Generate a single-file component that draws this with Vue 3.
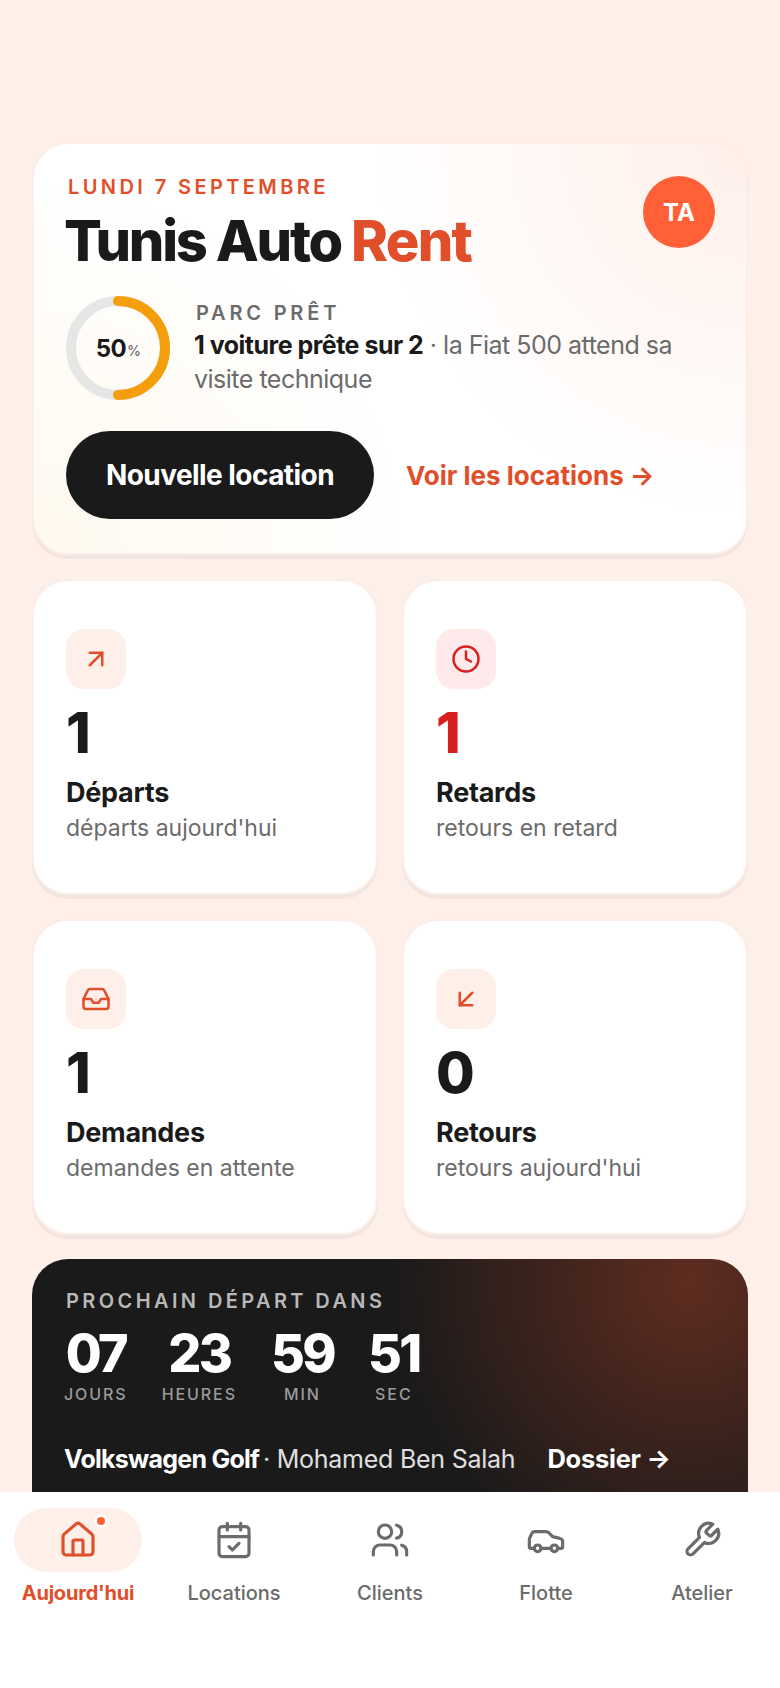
<template>
	<div class="app">
		<main class="content">
			<section class="hero card">
				<div class="hero-top">
					<div>
						<p class="date">LUNDI 7 SEPTEMBRE</p>
						<h1 class="brand">Tunis Auto <span class="accent">Rent</span></h1>
					</div>
					<div class="avatar">TA</div>
				</div>
				<div class="ready">
					<div class="ring">
						<svg viewBox="0 0 104 104" width="104" height="104">
							<circle cx="52" cy="52" r="47" fill="none" stroke="#e6e6e6" stroke-width="10" />
							<path d="M52 5a47 47 0 0 1 0 94" fill="none" stroke="#f59e0b" stroke-width="10" stroke-linecap="round" />
						</svg>
						<span class="ring-text">50<small>%</small></span>
					</div>
					<div class="ready-text">
						<p class="ready-label">PARC PRÊT</p>
						<p class="ready-desc"><strong>1 voiture prête sur 2</strong> · la Fiat 500 attend sa visite technique</p>
					</div>
				</div>
				<div class="actions">
					<button class="primary" type="button">Nouvelle location</button>
					<a class="link">Voir les locations →</a>
				</div>
			</section>

			<section class="stats">
				<article v-for="s in stats" :key="s.title" class="stat card">
					<div class="stat-icon" :class="{danger: s.danger}">
						<svg viewBox="0 0 24 24" width="30" height="30" class="ico">
							<path v-for="d in s.paths" :key="d" :d="d" />
							<circle v-if="s.circle" cx="12" cy="12" r="10" />
						</svg>
					</div>
					<div class="stat-num" :class="{danger: s.danger}">{{ s.value }}</div>
					<div class="stat-title">{{ s.title }}</div>
					<div class="stat-sub">{{ s.sub }}</div>
				</article>
			</section>

			<section class="next">
				<p class="next-label">PROCHAIN DÉPART DANS</p>
				<div class="count">
					<div v-for="c in countdown" :key="c.unit" class="count-col">
						<span class="count-num">{{ c.num }}</span>
						<span class="count-unit">{{ c.unit }}</span>
					</div>
				</div>
				<div class="next-foot">
					<span class="next-car"><strong>Volkswagen Golf</strong> · Mohamed Ben Salah</span>
					<a class="next-link">Dossier →</a>
				</div>
			</section>
		</main>

		<nav class="tabs">
			<div v-for="t in tabs" :key="t.label" class="tab" :class="{active: t.active}">
				<div class="tab-icon">
					<svg viewBox="0 0 24 24" width="40" height="40" class="ico">
						<path v-for="d in t.paths" :key="d" :d="d" />
						<circle v-for="c in t.circles" :key="c[0]" :cx="c[0]" :cy="c[1]" :r="c[2]" />
						<rect v-if="t.rect" x="3" y="4" width="18" height="18" rx="2" />
					</svg>
					<span v-if="t.active" class="dot"></span>
				</div>
				<span class="tab-label">{{ t.label }}</span>
			</div>
		</nav>
	</div>
</template>

<script setup>
const stats = [
	{value: "1", title: "Départs", sub: "départs aujourd'hui", paths: ["M7 7h10v10", "M7 17 17 7"]},
	{value: "1", title: "Retards", sub: "retours en retard", danger: true, circle: true, paths: ["M12 6v6l4 2"]},
	{
		value: "1",
		title: "Demandes",
		sub: "demandes en attente",
		paths: [
			"M22 12h-6l-2 3h-4l-2-3H2",
			"M5.45 5.11 2 12v6a2 2 0 0 0 2 2h16a2 2 0 0 0 2-2v-6l-3.45-6.89A2 2 0 0 0 16.76 4H7.24a2 2 0 0 0-1.79 1.11z"
		]
	},
	{value: "0", title: "Retours", sub: "retours aujourd'hui", paths: ["M17 7 7 17", "M17 17H7V7"]}
]

const countdown = [
	{num: "07", unit: "JOURS"},
	{num: "23", unit: "HEURES"},
	{num: "59", unit: "MIN"},
	{num: "51", unit: "SEC"}
]

const tabs = [
	{
		label: "Aujourd'hui",
		active: true,
		paths: [
			"M15 21v-8a1 1 0 0 0-1-1h-4a1 1 0 0 0-1 1v8",
			"M3 10a2 2 0 0 1 .709-1.528l7-5.999a2 2 0 0 1 2.582 0l7 5.999A2 2 0 0 1 21 10v9a2 2 0 0 1-2 2H5a2 2 0 0 1-2-2z"
		]
	},
	{label: "Locations", rect: true, paths: ["M8 2v4", "M16 2v4", "M3 10h18", "m9 16 2 2 4-4"]},
	{
		label: "Clients",
		circles: [[9, 7, 4]],
		paths: ["M16 21v-2a4 4 0 0 0-4-4H6a4 4 0 0 0-4 4v2", "M22 21v-2a4 4 0 0 0-3-3.87", "M16 3.13a4 4 0 0 1 0 7.75"]
	},
	{
		label: "Flotte",
		circles: [[7, 17, 2], [17, 17, 2]],
		paths: [
			"M19 17h2c.6 0 1-.4 1-1v-3c0-.9-.7-1.7-1.5-1.9C18.7 10.6 16 10 16 10s-1.3-1.4-2.2-2.3c-.5-.4-1.1-.7-1.8-.7H5c-.6 0-1.1.4-1.4.9l-1.4 2.9A3.7 3.7 0 0 0 2 12v4c0 .6.4 1 1 1h2",
			"M9 17h6"
		]
	},
	{
		label: "Atelier",
		paths: [
			"M14.7 6.3a1 1 0 0 0 0 1.4l1.6 1.6a1 1 0 0 0 1.4 0l3.77-3.77a6 6 0 0 1-7.94 7.94l-6.91 6.91a2.12 2.12 0 0 1-3-3l6.91-6.91a6 6 0 0 1 7.94-7.94l-3.76 3.76z"
		]
	}
]
</script>

<style>
html, body {
	margin: 0;
	background: #ffefe9;
}
</style>

<style scoped>
.app {
	width: 780px;
	height: 1688px;
	display: flex;
	flex-direction: column;
	overflow: hidden;
	font-family: Inter, "Noto Sans", sans-serif;
	color: #1a1a1a;
}

.content {
	flex: 1;
	min-height: 0;
	overflow: hidden;
	padding: 142px 32px 0;
	display: flex;
	flex-direction: column;
	gap: 24px;
}

.card {
	background: #fff;
	border: 2px solid #fbeee9;
	box-shadow: 0 4px 0 #f3e4df;
	border-radius: 36px;
	box-sizing: border-box;
}

p, h1 {
	margin: 0;
}

.hero {
	height: 413px;
	flex: none;
	padding: 29px 31px 0 30px;
	background:
		radial-gradient(circle at 100% 0, #ffefe9 0, rgba(255, 239, 233, 0) 45%),
		radial-gradient(circle at 0 100%, #fff9ee 0, rgba(255, 249, 238, 0) 45%),
		#fff;
}

.hero-top {
	display: flex;
	justify-content: space-between;
	align-items: flex-start;
}

.date {
	font-size: 20px;
	line-height: 28px;
	font-weight: 600;
	letter-spacing: 0.17em;
	color: #e04e2a;
	padding-left: 4px;
}

.brand {
	font-size: 56px;
	line-height: 68px;
	font-weight: 800;
	letter-spacing: -0.04em;
	margin-top: 6px;
}

.accent {
	color: #e04e2a;
	letter-spacing: -0.03em;
}

.avatar {
	width: 72px;
	height: 72px;
	border-radius: 50%;
	background: #ff6038;
	color: #fff;
	font-size: 24px;
	font-weight: 700;
	display: flex;
	align-items: center;
	justify-content: center;
	margin-top: 3px;
}

.ready {
	display: flex;
	gap: 24px;
	align-items: center;
	margin-top: 21px;
	padding-left: 2px;
}

.ring {
	position: relative;
	width: 104px;
	height: 104px;
	flex: none;
}

.ring svg {
	display: block;
}

.ring-text {
	position: absolute;
	inset: 0;
	display: flex;
	align-items: center;
	justify-content: center;
	font-size: 24px;
	font-weight: 700;
	letter-spacing: -0.03em;
}

.ring-text small {
	font-size: 14px;
	font-weight: 500;
	color: #6b6b6b;
	margin-top: 5px;
	margin-left: 1px;
}

.ready-text {
	flex: 1;
}

.ready-label {
	font-size: 20px;
	line-height: 26px;
	font-weight: 600;
	letter-spacing: 0.19em;
	color: #6b6b6b;
	padding-left: 2px;
}

.ready-desc {
	font-size: 25px;
	line-height: 34px;
	color: #6b6b6b;
	letter-spacing: -0.02em;
	margin-top: 2px;
}

.ready-desc strong {
	color: #1a1a1a;
	font-weight: 700;
}

.actions {
	display: flex;
	align-items: center;
	gap: 32px;
	margin-top: 31px;
	padding-left: 2px;
}

.primary {
	width: 308px;
	height: 88px;
	border: none;
	border-radius: 44px;
	background: #1a1a1a;
	color: #fff;
	font-family: inherit;
	font-size: 28px;
	font-weight: 700;
	letter-spacing: -0.02em;
}

.link {
	font-size: 26px;
	font-weight: 700;
	color: #e04e2a;
}

.stats {
	display: grid;
	grid-template-columns: 1fr 1fr;
	gap: 24px;
	flex: none;
}

.stat {
	height: 316px;
	padding: 48px 32px 0;
}

.stat-icon {
	width: 60px;
	height: 60px;
	border-radius: 18px;
	background: #ffefe9;
	color: #e04e2a;
	display: flex;
	align-items: center;
	justify-content: center;
}

.stat-icon.danger {
	background: #feeaea;
	color: #d92020;
}

.ico {
	fill: none;
	stroke: currentColor;
	stroke-width: 2;
	stroke-linecap: round;
	stroke-linejoin: round;
	display: block;
}

.tab .ico {
	stroke-width: 1.9;
}

.stat-num {
	font-size: 56px;
	line-height: 68px;
	font-weight: 800;
	margin-top: 10px;
}

.stat-num.danger {
	color: #d92020;
}

.stat-title {
	font-size: 27px;
	line-height: 34px;
	font-weight: 700;
	letter-spacing: -0.01em;
	margin-top: 9px;
}

.stat-sub {
	font-size: 23px;
	line-height: 32px;
	color: #6b6b6b;
	margin-top: 2px;
}

.next {
	flex: none;
	height: 270px;
	box-sizing: border-box;
	padding: 28px 34px 0;
	border-radius: 36px;
	background:
		radial-gradient(circle 300px at 658px 24px, rgba(224, 78, 42, 0.35) 0, rgba(224, 78, 42, 0) 100%),
		#1a1a1a;
	color: #fff;
}

.next-label {
	font-size: 20px;
	line-height: 28px;
	font-weight: 600;
	letter-spacing: 0.17em;
	color: #b8b8b8;
}

.count {
	display: flex;
	gap: 34px;
	margin-top: 8px;
	margin-left: -2px;
}

.count-col {
	display: flex;
	flex-direction: column;
	align-items: center;
}

.count-num {
	font-size: 52px;
	line-height: 61px;
	font-weight: 800;
	letter-spacing: -0.05em;
}

.count-unit {
	font-size: 16px;
	line-height: 20px;
	font-weight: 500;
	letter-spacing: 0.12em;
	color: #9a9a9a;
}

.next-foot {
	display: flex;
	align-items: center;
	gap: 32px;
	margin-top: 38px;
	margin-left: -2px;
	font-size: 25px;
	line-height: 34px;
	letter-spacing: -0.01em;
}

.next-car {
	color: #e0e0e0;
}

.next-car strong {
	color: #fff;
	font-weight: 700;
	letter-spacing: -0.03em;
	margin-right: -3px;
}

.next-link {
	font-size: 25.5px;
	font-weight: 700;
}

.tabs {
	flex: none;
	height: 196px;
	box-sizing: border-box;
	background: #fff;
	display: grid;
	grid-template-columns: repeat(5, 1fr);
	padding-top: 16px;
	position: relative;
}

.tab {
	display: flex;
	flex-direction: column;
	align-items: center;
	color: #6b6b6b;
}

.tab-icon {
	position: relative;
	width: 128px;
	height: 64px;
	border-radius: 32px;
	display: flex;
	align-items: center;
	justify-content: center;
}

.tab.active {
	color: #e04e2a;
}

.tab.active .tab-icon {
	background: #ffefe9;
}

.dot {
	position: absolute;
	top: 6px;
	right: 34px;
	width: 8px;
	height: 8px;
	border-radius: 50%;
	background: #ff6038;
	border: 3px solid #fff;
}

.tab-label {
	font-size: 20px;
	line-height: 28px;
	font-weight: 500;
	margin-top: 7px;
}

.tab.active .tab-label {
	font-weight: 700;
	letter-spacing: -0.01em;
}
</style>
